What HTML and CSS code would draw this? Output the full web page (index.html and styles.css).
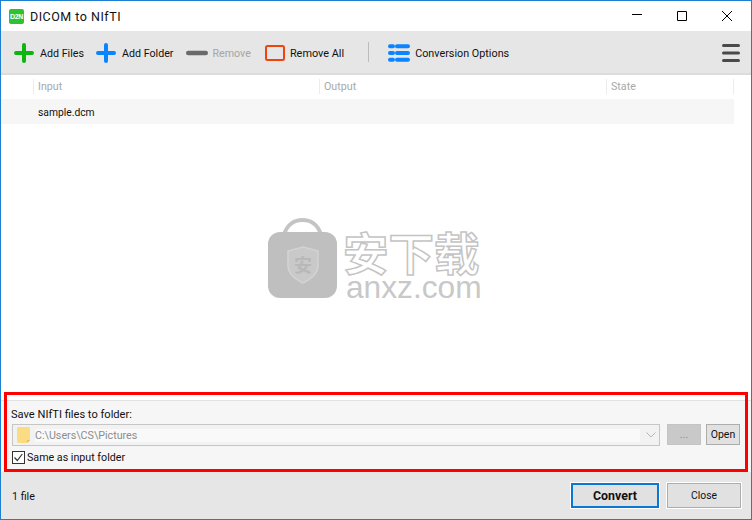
FILE: index.html
```html
<!DOCTYPE html>
<html lang="en">
<head>
<meta charset="utf-8">
<title>DICOM to NIfTI</title>
<link rel="stylesheet" href="styles.css">
</head>
<body>
<div class="window">
  <header class="titlebar">
    <span class="app-icon">D2N</span>
    <span class="app-title">DICOM to NIfTI</span>
    <span class="caption">
      <svg class="cap-btn" width="12" height="12" viewBox="0 0 12 12"><path d="M1 4.500h10" stroke="#000" fill="none"/></svg>
      <svg class="cap-btn" width="12" height="12" viewBox="0 0 12 12"><path d="M1.500 1.500h9v9h-9z" stroke="#000" fill="none"/></svg>
      <svg class="cap-btn" width="12" height="12" viewBox="0 0 12 12"><path d="M1 1l10 10M11 1L1 11" stroke="#000" fill="none"/></svg>
    </span>
  </header>
  <nav class="toolbar">
    <span class="tool tool-files">
      <svg width="20" height="20" viewBox="0 0 20 20"><path d="M10 2v16M2 10h16" stroke="#0fb50f" stroke-width="4" stroke-linecap="round"/></svg>
      <span>Add Files</span>
    </span>
    <span class="tool tool-folder">
      <svg width="20" height="20" viewBox="0 0 20 20"><path d="M10 2v16M2 10h16" stroke="#0a84ff" stroke-width="4" stroke-linecap="round"/></svg>
      <span>Add Folder</span>
    </span>
    <span class="tool tool-remove disabled">
      <svg width="22" height="20" viewBox="0 0 22 20"><path d="M2.200 10h17.600" stroke="#6a6a6a" stroke-width="4.400" stroke-linecap="round"/></svg>
      <span>Remove</span>
    </span>
    <span class="tool tool-all">
      <svg width="20" height="16" viewBox="0 0 20 16"><rect x="1" y="1" width="18" height="14" rx="1.500" fill="none" stroke="#f0440f" stroke-width="2"/></svg>
      <span>Remove All</span>
    </span>
    <span class="tool-sep"></span>
    <span class="tool tool-options">
      <svg width="22" height="18" viewBox="0 0 22 18"><path d="M2 2.300h3M2 9h3M2 15.700h3M9 2.300h11M9 9h11M9 15.700h11" stroke="#0a84ff" stroke-width="4" stroke-linecap="round"/></svg>
      <span>Conversion Options</span>
    </span>
    <svg class="menu" width="18" height="18" viewBox="0 0 18 18"><path d="M1.500 1.500h15M1.500 9h15M1.500 16.500h15" stroke="#4a4a4a" stroke-width="3" stroke-linecap="round"/></svg>
  </nav>
  <main class="list">
    <div class="list-head">
      <span class="col col-input">Input</span>
      <span class="col col-output">Output</span>
      <span class="col col-state">State</span>
    </div>
    <div class="list-row">sample.dcm</div>
    <div class="watermark">
      <svg class="wm-bag" width="69" height="80" viewBox="0 0 69 80">
        <path d="M16 17C19 6 27 2 34.500 2s15.500 4 18.500 15" fill="none" stroke="#c4c4c4" stroke-width="4"/>
        <rect x="0" y="14" width="69" height="66" rx="12" fill="#bfbfbf"/>
        <path d="M35 29l15 4v15c0 8-7 13-15 17c-8-4-15-9-15-17V33z" fill="#c9c9c9" stroke="#d3d3d3" stroke-width="1.500"/>
        <text x="35" y="54" class="wm-glyph">安</text>
      </svg>
      <div class="wm-text">
        <div class="wm-cn">安下载</div>
        <div class="wm-en">anxz.com</div>
      </div>
    </div>
  </main>
  <section class="panel">
    <div class="panel-label">Save NIfTI files to folder:</div>
    <div class="panel-row">
      <div class="combo">
        <svg class="folder" width="13" height="16" viewBox="0 0 14 17"><path d="M0 1.500Q0 0 1.500 0H12.500Q14 0 14 1.500V14l-3 3H1.500Q0 17 0 15.500z" fill="#fbdc83"/><path d="M11 17v-3h3z" fill="#e7b94e"/></svg>
        <span class="combo-text">C:\Users\CS\Pictures</span>
        <svg class="chev" width="10" height="6" viewBox="0 0 10 6"><path d="M.5.500l4.500 4.500 4.500-4.500" fill="none" stroke="#b5b5b5"/></svg>
      </div>
      <span class="btn btn-dots">...</span>
      <span class="btn btn-open">Open</span>
    </div>
    <label class="check">
      <svg width="13" height="13" viewBox="0 0 13 13"><rect x=".5" y=".5" width="12" height="12" fill="#fff" stroke="#333"/><path d="M2.500 6.500l2.800 3 5-6.500" fill="none" stroke="#333" stroke-width="1.200"/></svg>
      <span>Same as input folder</span>
    </label>
  </section>
  <footer class="footer">
    <span class="count">1 file</span>
    <span class="btn btn-convert">Convert</span>
    <span class="btn btn-close">Close</span>
  </footer>
  <div class="highlight"></div>
</div>
</body>
</html>
```
FILE: styles.css
```css
* { box-sizing: border-box; }
html, body { margin: 0; padding: 0; }
body { width: 752px; height: 520px; overflow: hidden; font-family: Roboto, "Noto Sans", sans-serif; font-size: 10.700px; color: #111; background: #fff; }
.window { position: relative; width: 752px; height: 520px; border: 1px solid #1c7fd0; display: flex; flex-direction: column; }
.titlebar { height: 30px; flex: none; display: flex; align-items: center; padding-left: 8px; background: #fff; }
.app-icon { width: 15px; height: 15px; border-radius: 2px; background: #2fc22f; color: #fff; font: bold 7px/15px "Liberation Sans", sans-serif; text-align: center; letter-spacing: -.3px; }
.app-title { margin-left: 6px; font-size: 12.500px; color: #111; letter-spacing: .5px; }
.caption { margin-left: auto; display: flex; gap: 33px; padding-right: 18px; }
.cap-btn { display: block; }
.toolbar { height: 44px; flex: none; display: flex; align-items: center; background: #e6e6e6; border-bottom: 2px solid #dcdcdc; padding: 2px 11px 0 13px; }
.tool { display: flex; align-items: center; }
.tool svg { display: block; }
.tool span { margin-left: 6px; }
.tool-folder { margin-left: 12px; }
.tool-remove { margin-left: 13px; }
.tool-remove span { margin-left: 4px; }
.tool-all { margin-left: 14px; }
.tool-all span { margin-left: 5px; font-size: 10.900px; }
.disabled { color: #a5a5a5; }
.tool-sep { width: 1px; height: 20px; background: #bcbcbc; margin-left: 24px; margin-top: -2px; }
.tool-options { margin-left: 19px; }
.tool-options span { margin-left: 5px; font-size: 10.800px; }
.menu { margin-left: auto; display: block; }
.list { position: relative; flex: 1; min-height: 0; background: #fff; }
.list-head { display: flex; height: 24px; padding-left: 32px; width: 734px; color: #a8a8a8; }
.col { display: flex; align-items: center; padding-left: 4px; border-left: 1px solid #ececec; margin: 4px 0 5px; }
.col-input { width: 286px; }
.col-output { width: 287px; }
.col-state { width: 128px; border-right: 1px solid #ececec; }
.list-row { width: 733px; height: 25px; background: #f6f6f6; padding: 1px 0 0 37px; line-height: 25px; font-size: 10.300px; }
.watermark { position: absolute; left: 267px; top: 143px; display: flex; gap: 6px; }
.wm-bag { display: block; }
.wm-glyph { font: bold 18px "Noto Sans CJK SC", sans-serif; fill: #b8b8b8; text-anchor: middle; }
.wm-text { display: flex; flex-direction: column; margin-top: 10px; }
.wm-cn { font: bold 45.500px/46px "Noto Sans CJK SC", sans-serif; color: #fff; -webkit-text-stroke: 1.500px #c4c4c4; }
.wm-en { font: 31.700px/27px "Liberation Sans", sans-serif; color: #c8c8c8; margin-left: 3px; }
.panel { height: 72px; flex: none; background: #f6f6f6; border-top: 1px solid #e3e3e3; padding: 6px 10px 0 11px; }
.panel-label { line-height: 15px; height: 16px; margin-left: -1px; font-size: 11.100px; }
.panel-row { display: flex; margin-top: 1px; }
.combo { width: 648px; height: 22px; background: #f2f2f2; border: 1px solid #c6c6c6; display: flex; align-items: center; padding: 0 3px 0 4px; }
.combo-text { margin-left: 5px; color: #8c8c8c; flex: 1; background: #f9f9f9; line-height: 13px; }
.folder { display: block; }
.chev { margin-left: 6px; display: block; }
.btn { display: flex; align-items: center; justify-content: center; background: #e1e1e1; border: 1px solid #adadad; }
.btn-dots { width: 34px; height: 21px; margin-left: 7px; background: #c9c9c9; border-color: #c4c4c4; color: #8c8c8c; }
.btn-open { width: 34px; height: 21px; margin-left: 5px; font-size: 10.500px; }
.check { display: flex; align-items: center; margin-top: 5px; }
.check svg { display: block; }
.check span { margin-left: 2px; }
.footer { height: 47px; flex: none; background: #e6e6e6; display: flex; align-items: center; padding: 0 10px 0 11px; }
.count { margin: 2px auto 0 0; }
.btn-convert { width: 88px; height: 25px; font-weight: bold; font-size: 12.400px; border: 2px solid #0a78d2; outline: 1px solid #fff; }
.btn-close { width: 74px; height: 25px; margin-left: 8px; outline: 1px solid #fff; font-size: 10.300px; }
.highlight { position: absolute; left: 3px; top: 391px; width: 744px; height: 80px; border: 3px solid #f00; pointer-events: none; }
```
